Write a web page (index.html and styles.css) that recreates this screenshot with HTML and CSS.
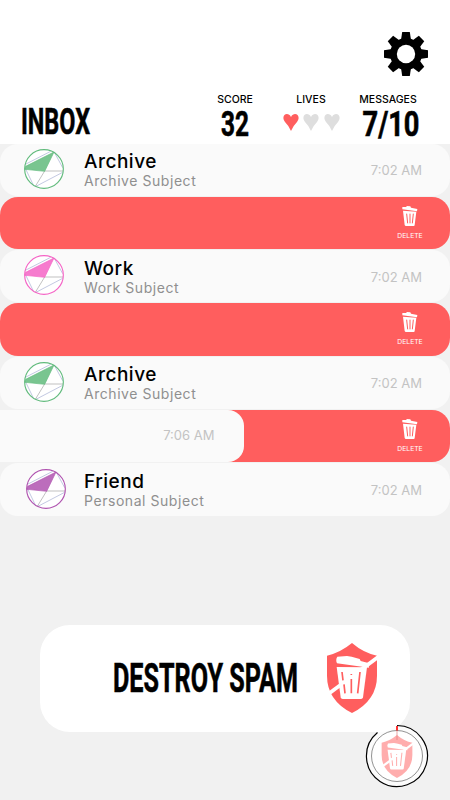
FILE: index.html
```html
<!DOCTYPE html>
<html lang="en">
<head>
    <meta charset="UTF-8">
    <meta name="viewport" content="width=device-width, initial-scale=1.0">
    <title>Inbox</title>
    <link rel="stylesheet" href="styles.css">
</head>
<body>
    <!-- Shared shapes -->
    <svg class="defs" width="0" height="0">
        <symbol id="avatar" viewBox="0 0 120 120">
            <circle cx="60" cy="60" r="58" fill="#fff"/>
            <path d="M4 58 L28 108 M4 46 L80 7 M90 8 L116 56 M116 70 L34 113" stroke="#c3c9e2" stroke-width="3" fill="none"/>
            <path d="M62 66 H118 M62 66 L34 112" stroke="#b5b5b5" stroke-width="2.5"/>
            <path d="M90 9 L62 67 L3 61 L5 52 Z" fill="currentColor" fill-opacity=".85" stroke="currentColor" stroke-width="2"/>
            <circle cx="60" cy="60" r="58" fill="none" stroke="currentColor" stroke-width="3.5"/>
        </symbol>
        <symbol id="trash" viewBox="0 0 48 60">
            <path d="M1 3 L13 3 L14 0 L25 1 L27 5 L46 9 L45 16 L1 10 Z" fill="#fff"/>
            <path d="M3 14 L43 17 L38 57 Q38 60 35 60 H12 Q9 60 8 57 Z" fill="#fff"/>
            <path d="M14 23 L17 52 M24 23 V52 M34 23 L31 52" stroke="#ff5e5e" stroke-width="3"/>
        </symbol>
        <symbol id="shield" viewBox="0 0 150 210">
            <path d="M75 0 Q110 30 150 38 V98 Q150 172 75 210 Q0 172 0 98 V38 Q40 29 75 0 Z" fill="#ff5e5e"/>
            <path d="M7 151 L155 41" stroke="#fff" stroke-width="11"/>
            <path d="M31 41 L60 39 L74 41 L98 48 L101 54 L124 60 L126 74 L30 61 Q25 50 31 41 Z" fill="#fff"/>
            <path d="M29 72 L120 73 L108 163 Q107 168 102 168 H47 Q42 168 41 163 Z" fill="#fff"/>
            <path d="M45 87 L48 112 M51 124 L54 151 M73 93 V96 M73 108 V151 M99 87 L92 151" stroke="#ff5e5e" stroke-width="5"/>
        </symbol>
    </svg>

    <div class="screen">
        <header class="header">
            <button class="settings" aria-label="Settings">
                <svg width="44" height="44" viewBox="-22 -22 44 44">
                    <path d="M-5 -14 L-3.8 -22 H3.8 L5 -14 V14 L3.8 22 H-3.8 L-5 14 Z"/>
                    <path d="M-5 -14 L-3.8 -22 H3.8 L5 -14 V14 L3.8 22 H-3.8 L-5 14 Z" transform="rotate(45)"/>
                    <path d="M-5 -14 L-3.8 -22 H3.8 L5 -14 V14 L3.8 22 H-3.8 L-5 14 Z" transform="rotate(90)"/>
                    <path d="M-5 -14 L-3.8 -22 H3.8 L5 -14 V14 L3.8 22 H-3.8 L-5 14 Z" transform="rotate(135)"/>
                    <circle r="16"/>
                    <circle r="9.2" fill="#fff"/>
                </svg>
            </button>
            <div class="status">
                <svg class="display title" width="76" height="42"><text x="1" y="34" font-size="37.5" textLength="69" lengthAdjust="spacingAndGlyphs">INBOX</text></svg>
                <div class="stat score">
                    <span class="stat-label">SCORE</span>
                    <svg class="display" width="34" height="36"><text x="3" y="27" font-size="35" textLength="28" lengthAdjust="spacingAndGlyphs">32</text></svg>
                </div>
                <div class="stat lives">
                    <span class="stat-label">LIVES</span>
                    <div class="hearts">
                        <svg class="heart full" viewBox="0 0 16 17"><path d="M8 17 Q6 12 2 8 C-3 1 5 -3 8 3 C11 -3 19 1 14 8 Q10 12 8 17 Z"/></svg>
                        <svg class="heart" viewBox="0 0 16 17"><path d="M8 17 Q6 12 2 8 C-3 1 5 -3 8 3 C11 -3 19 1 14 8 Q10 12 8 17 Z"/></svg>
                        <svg class="heart" viewBox="0 0 16 17"><path d="M8 17 Q6 12 2 8 C-3 1 5 -3 8 3 C11 -3 19 1 14 8 Q10 12 8 17 Z"/></svg>
                    </div>
                </div>
                <div class="stat messages">
                    <span class="stat-label">MESSAGES</span>
                    <svg class="display" width="64" height="36"><text x="6.5" y="27" font-size="35" textLength="57" lengthAdjust="spacingAndGlyphs">7/10</text></svg>
                </div>
            </div>
        </header>

        <main class="list">
            <div class="mail">
                <svg class="avatar archive"><use href="#avatar"/></svg>
                <div class="info">
                    <div class="name">Archive</div>
                    <div class="subject">Archive Subject</div>
                </div>
                <span class="time">7:02 AM</span>
            </div>
            <div class="deleted">
                <div class="delete"><svg class="trash"><use href="#trash"/></svg>DELETE</div>
            </div>
            <div class="mail">
                <svg class="avatar work"><use href="#avatar"/></svg>
                <div class="info">
                    <div class="name">Work</div>
                    <div class="subject">Work Subject</div>
                </div>
                <span class="time">7:02 AM</span>
            </div>
            <div class="deleted">
                <div class="delete"><svg class="trash"><use href="#trash"/></svg>DELETE</div>
            </div>
            <div class="mail">
                <svg class="avatar archive"><use href="#avatar"/></svg>
                <div class="info">
                    <div class="name">Archive</div>
                    <div class="subject">Archive Subject</div>
                </div>
                <span class="time">7:02 AM</span>
            </div>
            <div class="deleted swiping">
                <div class="swiped"><span class="time">7:06 AM</span></div>
                <div class="delete"><svg class="trash"><use href="#trash"/></svg>DELETE</div>
            </div>
            <div class="mail">
                <svg class="avatar friend"><use href="#avatar"/></svg>
                <div class="info">
                    <div class="name">Friend</div>
                    <div class="subject">Personal Subject</div>
                </div>
                <span class="time">7:02 AM</span>
            </div>
        </main>

        <button class="destroy">
            <svg class="display" width="190" height="48"><text x="1" y="38" font-size="41" textLength="185" lengthAdjust="spacingAndGlyphs">DESTROY SPAM</text></svg>
            <svg class="shield"><use href="#shield"/></svg>
        </button>

        <!-- Power-up timer -->
        <svg class="timer" viewBox="-32 -32 64 64">
            <circle r="30.5" fill="#fff" fill-opacity=".8"/>
            <circle r="25.5" fill="#fff" stroke="#777" stroke-width=".8"/>
            <use href="#shield" x="-16" y="-21" width="32" height="43" opacity=".5"/>
            <path d="M0 -30.5 A30.5 30.5 0 1 1 -19.5 -23.5" fill="none" stroke="#000" stroke-width="1.2"/>
            <path d="M0 -25 V-16" stroke="#e08080" stroke-width=".7"/>
            <path d="M0 -30 V-25.5" stroke="#f00" stroke-width="1.6"/>
        </svg>
    </div>
</body>
</html>
```
FILE: styles.css
```css
* {
    margin: 0;
    padding: 0;
    box-sizing: border-box;
}

body {
    font-family: Inter, 'Open Sans', sans-serif;
    background: #f1f1f1;
    color: #000;
}

button {
    border: none;
    background: none;
    cursor: pointer;
}

svg {
    display: block;
    flex-shrink: 0;
}

.defs {
    position: absolute;
}

.screen {
    position: relative;
    width: 450px;
    height: 800px;
    overflow: hidden;
}

.header {
    height: 143.5px;
    background: #fff;
    padding-top: 32px;
}

.settings {
    display: block;
    margin-left: auto;
    margin-right: 22px;
}

.display {
    overflow: visible;
}

.display text {
    font-family: Roboto, sans-serif;
    font-weight: 700;
    stroke: #000;
    stroke-width: 0.6px;
}

.status {
    display: flex;
    height: 67px;
}

.title {
    margin: 24px 0 0 20px;
}

.stat {
    display: flex;
    flex-direction: column;
    align-items: center;
    padding-top: 17px;
}

.stat-label {
    font-size: 10.5px;
    line-height: 14px;
    font-weight: 500;
    margin-bottom: 2px;
}

.score {
    width: 50px;
    margin-left: 114px;
}

.lives {
    width: 70px;
    margin-left: 16px;
}

.messages {
    width: 70px;
    margin-left: 7px;
}

.hearts {
    display: flex;
    gap: 4.5px;
    margin-top: 5px;
}

.heart {
    width: 16px;
    height: 17px;
    fill: #dedede;
}

.heart.full {
    fill: #ff5e5e;
}

.list {
    display: grid;
    grid-template-rows: repeat(7, 52.3px);
    row-gap: 1.03px;
}

.mail {
    display: flex;
    align-items: center;
    background: #fafafa;
    border-radius: 18px;
    padding: 0 28px 2px 24px;
}

.avatar {
    width: 40px;
    height: 40px;
    margin-right: 20px;
}

.archive {
    color: #62bb7d;
}

.work {
    color: #f564c6;
}

.friend {
    color: #b054b0;
    margin-left: 2px;
    margin-right: 18px;
}

.info {
    flex: 1;
    padding-top: 4px;
}

.name {
    font-size: 19px;
    line-height: 21px;
    font-weight: 500;
    letter-spacing: 0.5px;
}

.subject {
    font-size: 14px;
    line-height: 18px;
    letter-spacing: 0.55px;
    color: #8f8f8f;
}

.time {
    font-size: 13px;
    color: #c3c3c3;
    padding-top: 3px;
}

.deleted {
    display: flex;
    justify-content: flex-end;
    background: #ff5e5e;
    border-radius: 18px;
}

.delete {
    width: 80px;
    display: flex;
    flex-direction: column;
    align-items: center;
    padding-top: 9px;
    font-size: 6.8px;
    color: #fff;
}

.trash {
    width: 16px;
    height: 20px;
    margin-bottom: 5px;
}

.swiping {
    justify-content: space-between;
    border-radius: 0 18px 18px 0;
}

.swiped {
    display: flex;
    align-items: center;
    justify-content: flex-end;
    width: 243.5px;
    padding: 0 29px 6px 0;
    background: #fafafa;
    border-radius: 0 16px 16px 0;
}

.destroy {
    display: flex;
    align-items: center;
    width: 370px;
    height: 106.5px;
    margin: 109.5px 0 0 40px;
    padding-left: 72px;
    background: #fff;
    border-radius: 30px;
}

.shield {
    width: 50px;
    height: 70px;
    margin-left: 25px;
}

.timer {
    position: absolute;
    left: 365px;
    top: 723.5px;
    width: 64px;
    height: 64px;
}
```
